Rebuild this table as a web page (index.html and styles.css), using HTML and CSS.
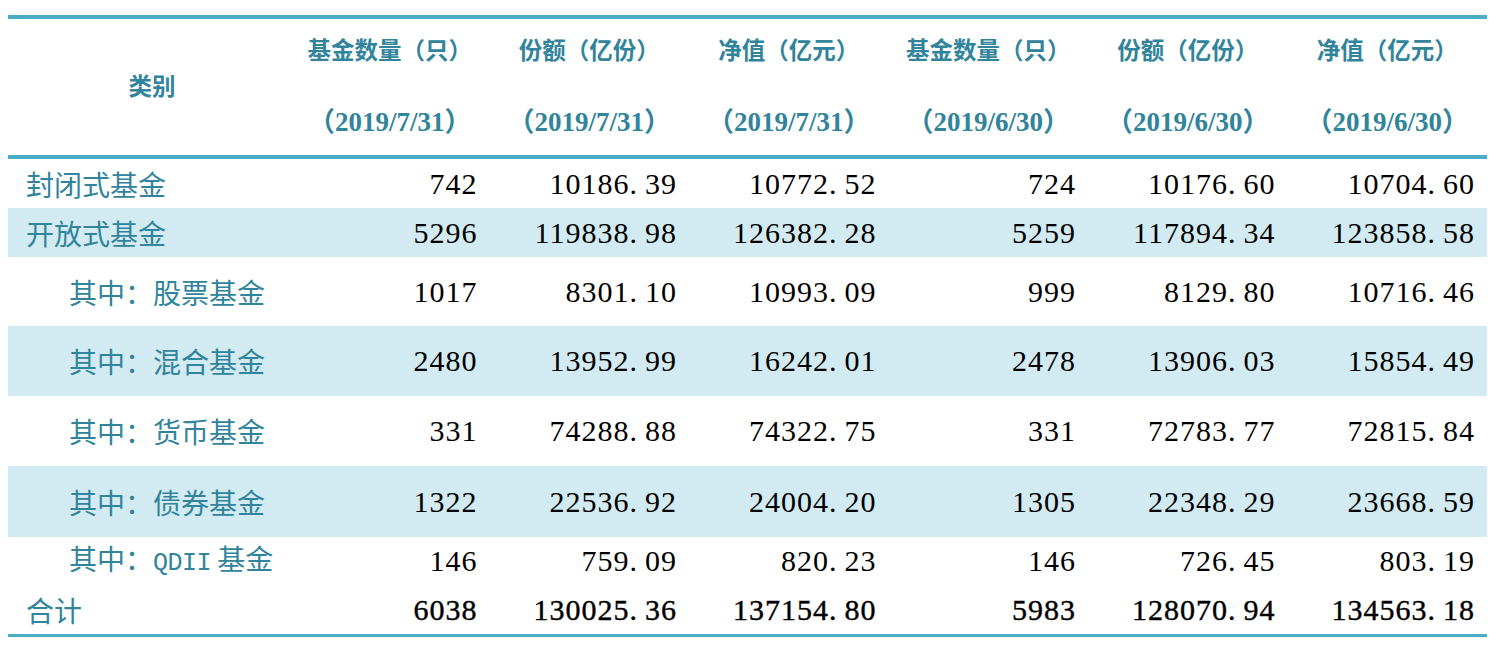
FILE: index.html
```html
<!DOCTYPE html>
<html lang="zh-CN">
<head>
<meta charset="utf-8">
<title>基金统计</title>
<link rel="stylesheet" href="styles.css">
</head>
<body>
<table class="fund-table">
  <colgroup>
    <col class="col-label">
    <col class="col-num"><col class="col-num"><col class="col-num">
    <col class="col-num"><col class="col-num"><col class="col-num">
  </colgroup>
  <thead>
    <tr class="head-row">
      <th class="h-cat">类别</th>
      <th><div class="h-line">基金数量（只）</div><div class="h-line h-date">（2019/7/31）</div></th>
      <th><div class="h-line">份额（亿份）</div><div class="h-line h-date">（2019/7/31）</div></th>
      <th><div class="h-line">净值（亿元）</div><div class="h-line h-date">（2019/7/31）</div></th>
      <th><div class="h-line">基金数量（只）</div><div class="h-line h-date">（2019/6/30）</div></th>
      <th><div class="h-line">份额（亿份）</div><div class="h-line h-date">（2019/6/30）</div></th>
      <th><div class="h-line">净值（亿元）</div><div class="h-line h-date">（2019/6/30）</div></th>
    </tr>
  </thead>
  <tbody>
    <tr class="r-49">
      <td class="lbl">封闭式基金</td>
      <td>742</td><td>10186<span class="pt">.</span>39</td><td>10772<span class="pt">.</span>52</td>
      <td>724</td><td>10176<span class="pt">.</span>60</td><td>10704<span class="pt">.</span>60</td>
    </tr>
    <tr class="r-49 shade">
      <td class="lbl">开放式基金</td>
      <td>5296</td><td>119838<span class="pt">.</span>98</td><td>126382<span class="pt">.</span>28</td>
      <td>5259</td><td>117894<span class="pt">.</span>34</td><td>123858<span class="pt">.</span>58</td>
    </tr>
    <tr class="r-69">
      <td class="lbl sub">其中：股票基金</td>
      <td>1017</td><td>8301<span class="pt">.</span>10</td><td>10993<span class="pt">.</span>09</td>
      <td>999</td><td>8129<span class="pt">.</span>80</td><td>10716<span class="pt">.</span>46</td>
    </tr>
    <tr class="r-70 shade">
      <td class="lbl sub">其中：混合基金</td>
      <td>2480</td><td>13952<span class="pt">.</span>99</td><td>16242<span class="pt">.</span>01</td>
      <td>2478</td><td>13906<span class="pt">.</span>03</td><td>15854<span class="pt">.</span>49</td>
    </tr>
    <tr class="r-70">
      <td class="lbl sub">其中：货币基金</td>
      <td>331</td><td>74288<span class="pt">.</span>88</td><td>74322<span class="pt">.</span>75</td>
      <td>331</td><td>72783<span class="pt">.</span>77</td><td>72815<span class="pt">.</span>84</td>
    </tr>
    <tr class="r-71 shade">
      <td class="lbl sub">其中：债券基金</td>
      <td>1322</td><td>22536<span class="pt">.</span>92</td><td>24004<span class="pt">.</span>20</td>
      <td>1305</td><td>22348<span class="pt">.</span>29</td><td>23668<span class="pt">.</span>59</td>
    </tr>
    <tr class="r-48">
      <td class="lbl sub">其中：<span class="latin">QDII</span> 基金</td>
      <td>146</td><td>759<span class="pt">.</span>09</td><td>820<span class="pt">.</span>23</td>
      <td>146</td><td>726<span class="pt">.</span>45</td><td>803<span class="pt">.</span>19</td>
    </tr>
    <tr class="r-49 total">
      <td class="lbl">合计</td>
      <td>6038</td><td>130025<span class="pt">.</span>36</td><td>137154<span class="pt">.</span>80</td>
      <td>5983</td><td>128070<span class="pt">.</span>94</td><td>134563<span class="pt">.</span>18</td>
    </tr>
  </tbody>
</table>
</body>
</html>
```

FILE: styles.css
```css
html, body {
  margin: 0;
  padding: 0;
  background: #ffffff;
}

body {
  padding: 15px 8px 0 8px;
}

.fund-table {
  width: 1479px;
  table-layout: fixed;
  border-collapse: separate;
  border-spacing: 0;
}

.col-label { width: 282px; }
.col-num { width: 199.5px; }

.head-row th {
  height: 136px;
  padding: 0;
  border-top: 4px solid #4bacc6;
  border-bottom: 4px solid #4bacc6;
  vertical-align: top;
  text-align: center;
  color: #31849b;
  font-family: "Liberation Serif", "Noto Sans CJK SC", serif;
  font-size: 23.5px;
  font-weight: 700;
}

.head-row th .h-line {
  height: 24px;
  line-height: 24px;
  white-space: nowrap;
}

.head-row th .h-line.h-date {
  font-size: 27px;
}

.head-row th .h-line:first-child {
  margin-top: 20px;
}

.head-row th .h-line + .h-line {
  margin-top: 47px;
}

.head-row th.h-cat {
  vertical-align: middle;
  line-height: 24px;
  padding-left: 6px;
}

.fund-table td {
  padding: 0 12px 0 0;
  vertical-align: middle;
  text-align: right;
  white-space: nowrap;
  color: #000000;
  font-family: "Liberation Serif", "Times New Roman", serif;
  font-size: 30px;
  letter-spacing: 1px;
  line-height: 30px;
}

.fund-table td .pt {
  margin-right: 7px;
}

.fund-table td.lbl {
  text-align: left;
  padding: 0 0 0 18px;
  color: #31849b;
  font-family: "Noto Sans CJK SC", "Noto Sans", sans-serif;
  font-size: 28px;
  letter-spacing: 0;
}

.fund-table td.lbl.sub {
  padding-left: 61px;
}

.fund-table td.lbl .latin {
  font-family: "Liberation Mono", monospace;
  font-size: 25px;
  letter-spacing: -0.5px;
}

.shade td {
  background: #d2eaf1;
}

.r-48 td { height: 48px; }
.r-49 td { height: 49px; }
.r-69 td { height: 69px; }
.r-70 td { height: 70px; }
.r-71 td { height: 71px; }

.total td {
  border-bottom: 3px solid #4bacc6;
  -webkit-text-stroke: 0.4px #000000;
}

.total td.lbl {
  -webkit-text-stroke: 0;
}
```
